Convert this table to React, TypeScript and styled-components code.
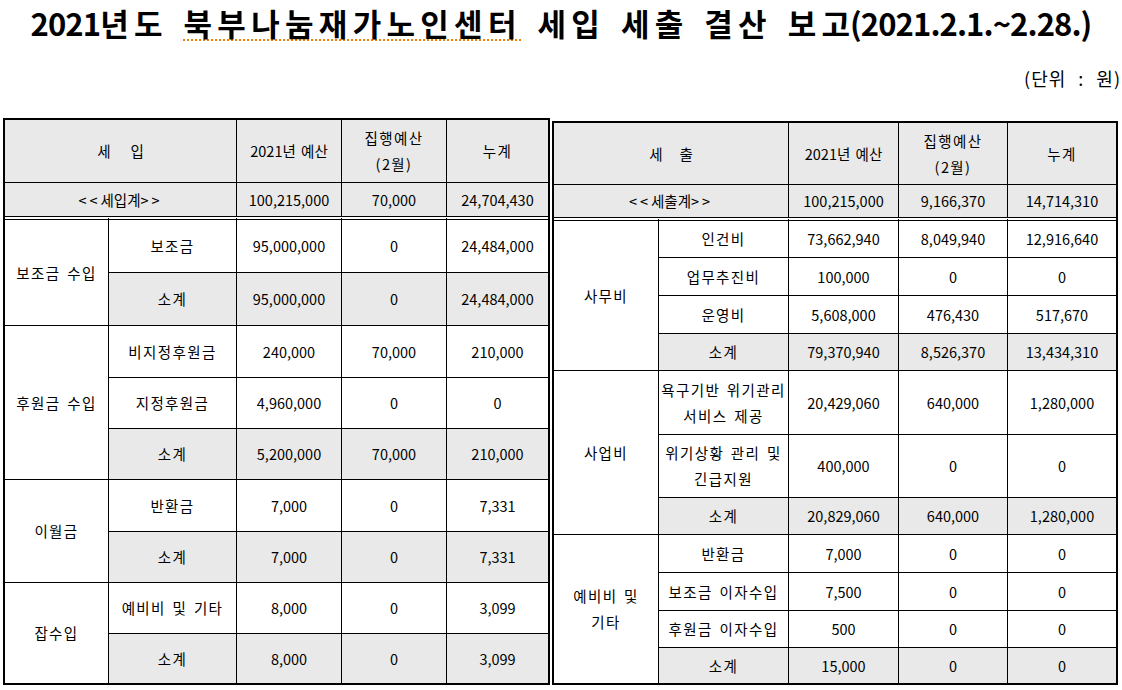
import React from "react";
import styled, { createGlobalStyle } from "styled-components";

const GlobalStyle = createGlobalStyle`
  * { box-sizing: border-box; }
  html, body { margin: 0; padding: 0; background: #ffffff; }
  body {
    font-family: "Noto Sans CJK KR", "Noto Sans", sans-serif;
    color: #000;
  }
`;

const Page = styled.div`
  width: 1122px;
  height: 690px;
  overflow: hidden;
  background: #fff;
`;

const Title = styled.h1`
  margin: 0;
  height: 45px;
  line-height: 45px;
  text-align: center;
  font-size: 31px;
  font-weight: 700;
  word-spacing: 14px;
  white-space: nowrap;
`;

const Ko = styled.span<{ $mark?: boolean }>`
  letter-spacing: 5.3px;
  margin-right: -5.3px;
  ${(p) =>
    p.$mark
      ? `
  text-decoration-line: underline;
  text-decoration-style: dotted;
  text-decoration-color: #f0820a;
  text-decoration-thickness: 2px;
  text-underline-offset: 3px;
  `
      : ""}
`;

const Num = styled.span`
  letter-spacing: -0.9px;
`;

const Unit = styled.div`
  margin-top: 19px;
  height: 28px;
  line-height: 28px;
  text-align: right;
  padding-right: 1px;
  font-size: 18px;
  letter-spacing: 1px;
  word-spacing: 7px;
`;

const Tables = styled.div`
  display: flex;
  align-items: flex-start;
  gap: 2px;
  margin-top: 26px;
  padding-left: 3px;
`;

const Table = styled.table<{ $w: number; $top: number }>`
  width: ${(p) => p.$w}px;
  margin-top: ${(p) => p.$top}px;
  border: 2px solid #000;
  border-collapse: separate;
  border-spacing: 0;
  table-layout: fixed;
  font-size: 14.5px;
  line-height: 26px;
`;

const Row = styled.tr<{ $h: number }>`
  height: ${(p) => p.$h}px;
`;

const Cell = styled.td<{ $gray?: boolean; $top?: "none" | "single" | "double"; $ko?: boolean }>`
  padding: 0 1px;
  text-align: center;
  vertical-align: middle;
  white-space: nowrap;
  word-spacing: 2px;
  letter-spacing: ${(p) => (p.$ko ? "1.4px" : "0")};
  background: ${(p) => (p.$gray ? "#e9e9e9" : "#fff")};
  border-right: 1px solid #000;
  border-top: ${(p) =>
    p.$top === "none" ? "0" : p.$top === "double" ? "4px double #000" : "1px solid #000"};
  &:last-child { border-right: 0; }
`;

const Spread = styled.span<{ $gap: number }>`
  display: inline-flex;
  gap: ${(p) => p.$gap}px;
`;

const Angle = styled.span`
  letter-spacing: 3px;
`;

type Body = { group?: { label: React.ReactNode; span: number }; label: React.ReactNode; a: string; b: string; c: string; sub?: boolean; h: number };

type TableProps = {
  widths: number[];
  width: number;
  top: number;
  head: React.ReactNode;
  total: string;
  totals: [string, string, string];
  heights: [number, number];
  rows: Body[];
};

const Ledger: React.FC<TableProps> = ({ widths, width, top, head, total, totals, heights, rows }) => (
  <Table $w={width} $top={top}>
    <colgroup>
      {widths.map((w, i) => (
        <col key={i} width={w} />
      ))}
    </colgroup>
    <tbody>
      <Row $h={heights[0]}>
        <Cell colSpan={2} $gray $top="none">{head}</Cell>
        <Cell $gray $top="none">2021년 예산</Cell>
        <Cell $gray $top="none" $ko>집행예산<br />(2월)</Cell>
        <Cell $gray $top="none" $ko>누계</Cell>
      </Row>
      <Row $h={heights[1]}>
        <Cell colSpan={2} $gray>
          <Angle>&lt;&lt;</Angle>{total}<Angle>&gt;&gt;</Angle>
        </Cell>
        <Cell $gray>{totals[0]}</Cell>
        <Cell $gray>{totals[1]}</Cell>
        <Cell $gray>{totals[2]}</Cell>
      </Row>
      {rows.map((r, i) => {
        const t = i === 0 ? "double" : "single";
        return (
          <Row key={i} $h={r.h}>
            {r.group && (
              <Cell rowSpan={r.group.span} $top={t} $ko>{r.group.label}</Cell>
            )}
            <Cell $gray={r.sub} $top={t} $ko>{r.label}</Cell>
            <Cell $gray={r.sub} $top={t}>{r.a}</Cell>
            <Cell $gray={r.sub} $top={t}>{r.b}</Cell>
            <Cell $gray={r.sub} $top={t}>{r.c}</Cell>
          </Row>
        );
      })}
    </tbody>
  </Table>
);

const leftRows: Body[] = [
  { group: { label: "보조금 수입", span: 2 }, label: "보조금", a: "95,000,000", b: "0", c: "24,484,000", h: 56 },
  { label: "소계", a: "95,000,000", b: "0", c: "24,484,000", sub: true, h: 53 },
  { group: { label: "후원금 수입", span: 3 }, label: "비지정후원금", a: "240,000", b: "70,000", c: "210,000", h: 52 },
  { label: "지정후원금", a: "4,960,000", b: "0", c: "0", h: 51 },
  { label: "소계", a: "5,200,000", b: "70,000", c: "210,000", sub: true, h: 51 },
  { group: { label: "이월금", span: 2 }, label: "반환금", a: "7,000", b: "0", c: "7,331", h: 52 },
  { label: "소계", a: "7,000", b: "0", c: "7,331", sub: true, h: 51 },
  { group: { label: "잡수입", span: 2 }, label: "예비비 및 기타", a: "8,000", b: "0", c: "3,099", h: 51 },
  { label: "소계", a: "8,000", b: "0", c: "3,099", sub: true, h: 50 },
];

const rightRows: Body[] = [
  { group: { label: "사무비", span: 4 }, label: "인건비", a: "73,662,940", b: "8,049,940", c: "12,916,640", h: 40 },
  { label: "업무추진비", a: "100,000", b: "0", c: "0", h: 38 },
  { label: "운영비", a: "5,608,000", b: "476,430", c: "517,670", h: 38 },
  { label: "소계", a: "79,370,940", b: "8,526,370", c: "13,434,310", sub: true, h: 37 },
  { group: { label: "사업비", span: 3 }, label: <>욕구기반 위기관리<br />서비스 제공</>, a: "20,429,060", b: "640,000", c: "1,280,000", h: 64 },
  { label: <>위기상황 관리 및<br />긴급지원</>, a: "400,000", b: "0", c: "0", h: 63 },
  { label: "소계", a: "20,829,060", b: "640,000", c: "1,280,000", sub: true, h: 37 },
  { group: { label: <>예비비 및<br />기타</>, span: 4 }, label: "반환금", a: "7,000", b: "0", c: "0", h: 38 },
  { label: "보조금 이자수입", a: "7,500", b: "0", c: "0", h: 38 },
  { label: "후원금 이자수입", a: "500", b: "0", c: "0", h: 37 },
  { label: "소계", a: "15,000", b: "0", c: "0", sub: true, h: 36 },
];

export default function App() {
  return (
    <Page>
      <GlobalStyle />
      <Title>
        <Num>2021</Num><Ko>년도</Ko> <Ko $mark>북부나눔재가노인센터</Ko> <Ko>세입</Ko> <Ko>세출</Ko>{" "}
        <Ko>결산</Ko> <Ko>보고</Ko><Num>(2021.2.1.~2.28.)</Num>
      </Title>
      <Unit>(단위 : 원)</Unit>
      <Tables>
        <Ledger
          width={547}
          top={0}
          widths={[104, 128, 105, 105, 101]}
          head={<Spread $gap={20}><span>세</span><span>입</span></Spread>}
          total="세입계"
          totals={["100,215,000", "70,000", "24,704,430"]}
          heights={[62, 34]}
          rows={leftRows}
        />
        <Ledger
          width={566}
          top={3}
          widths={[105, 130, 110, 109, 108]}
          head={<Spread $gap={17}><span>세</span><span>출</span></Spread>}
          total="세출계"
          totals={["100,215,000", "9,166,370", "14,714,310"]}
          heights={[61, 33]}
          rows={rightRows}
        />
      </Tables>
    </Page>
  );
}
